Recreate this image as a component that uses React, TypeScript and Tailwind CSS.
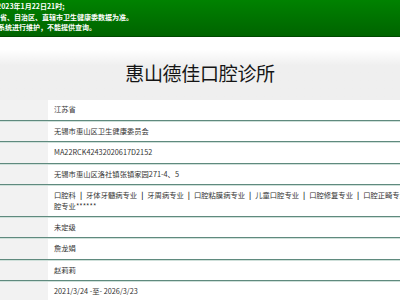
import React from 'react'

const specialties = ['口腔科', '牙体牙髓病专业', '牙周病专业', '口腔粘膜病专业', '儿童口腔专业', '口腔修复专业', '口腔正畸专业', '口']

const rows: { value: React.ReactNode; extra?: string }[] = [
  { value: '江苏省' },
  { value: '无锡市惠山区卫生健康委员会' },
  { value: 'MA22RCK42432020617D2152' },
  { value: '无锡市惠山区洛社镇张镇家园271-4、5' },
  {
    value: specialties.map((s, i) => (
      <React.Fragment key={s}>
        {i > 0 && <span className="mx-[4px] font-bold text-[#222]">|</span>}
        {s}
      </React.Fragment>
    )),
    extra: '腔专业******',
  },
  { value: '未定级' },
  { value: '詹龙娟' },
  { value: '赵莉莉' },
  { value: '2021/3/24 -至- 2026/3/23' },
]

const App = () => {
  return (
    <div
      className="w-[400px] h-[300px] overflow-hidden bg-white"
      style={{ fontFamily: '"Noto Sans CJK SC", "Liberation Sans", sans-serif' }}
    >
      {/* notice banner */}
      <div className="h-[37px] bg-gradient-to-b from-[#008200] to-[#006400] border-b border-[#004a00] pt-px
        text-white text-[7px] leading-[10.5px] font-bold whitespace-nowrap overflow-hidden">
        <div className="ml-[-38px]">数据更新至2023年1月22日21时;</div>
        <div className="ml-[-14px]">以各省、自治区、直辖市卫生健康委数据为准。</div>
        <div className="ml-[-16px]">期间系统进行维护，不能提供查询。</div>
      </div>

      {/* title */}
      <div className="h-[63px] bg-gradient-to-b from-white from-[20%] to-[#efefef] to-[45%] flex justify-center pt-[23px]">
        <h1 className="text-[19px] leading-[26px] text-[#151515] tracking-[-0.3px]">惠山德佳口腔诊所</h1>
      </div>

      {/* detail table */}
      <div className="flex flex-col text-[7.3px] text-[#333]">
        {rows.map((r, i) => (
          <div
            key={i}
            className={
              'flex border-b border-[#5f8a7e] ' + (i > 0 ? 'border-t border-t-[#cfe0da]' : '')
            }
          >
            <div className="w-[48px] shrink-0 bg-[#f2f2f2]" />
            <div
              className={
                'flex-1 bg-white pl-[6px] whitespace-nowrap overflow-hidden flex flex-col justify-center ' +
                (r.extra ? 'h-[29.5px] leading-[10.5px]' : 'h-[19.5px] leading-[19.5px]')
              }
            >
              <div>{r.value}</div>
              {r.extra && <div>{r.extra}</div>}
            </div>
          </div>
        ))}
      </div>
    </div>
  )
}

export default App
